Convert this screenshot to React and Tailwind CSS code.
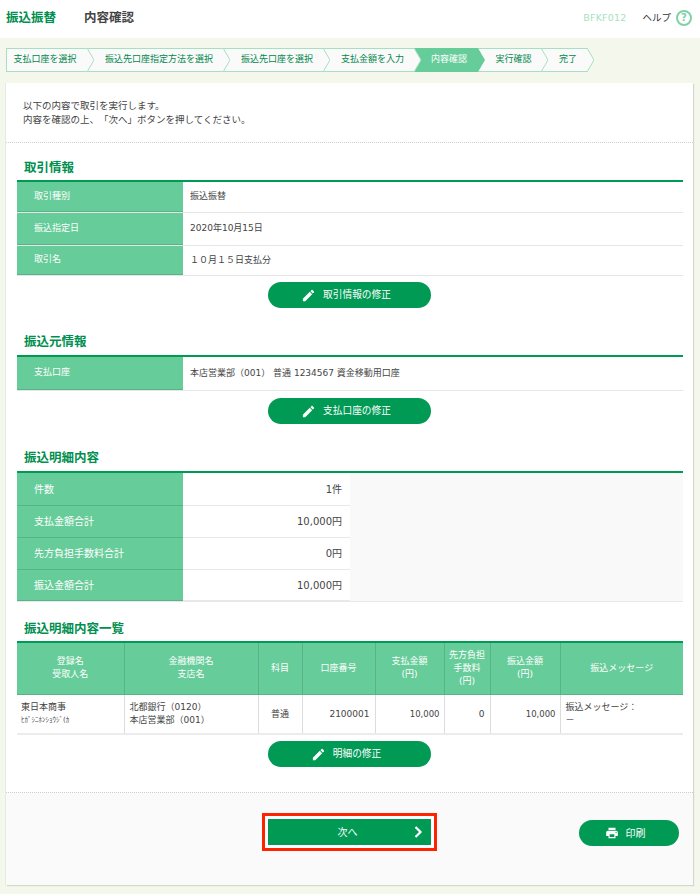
const FONT = '"DejaVu Sans","Noto Sans CJK JP",sans-serif';

const steps = [
  ['支払口座を選択', 81, false],
  ['振込先口座指定方法を選択', 136, false],
  ['振込先口座を選択', 100, false],
  ['支払金額を入力', 91, false],
  ['内容確認', 64, true],
  ['実行確認', 63, false],
  ['完了', 46, false],
];

function Step({ label, width, active, first }) {
  return (
    <div
      className={`relative flex h-6 items-center justify-center text-[9px] ${active ? 'bg-[#66cc99] text-white' : 'border-y border-[#a8dfc2] bg-[#fafafa] text-[#00884d]'} ${first ? 'border-l' : ''}`}
      style={{ width }}
    >
      <span className={`relative z-10 ${first ? 'pr-1' : active ? 'pl-[6px]' : 'pl-2'}`}>{label}</span>
      <svg className={`absolute left-full z-[5] ${active ? 'top-0' : 'top-[-1px]'}`} width="7" height="24" viewBox="0 0 7 24">
        {active ? (
          <polygon points="0,0 7,12 0,24" fill="#66cc99" />
        ) : (
          <>
            <polygon points="0,0 7,12 0,24" fill="#fafafa" />
            <polyline points="0,0 7,12 0,24" fill="none" stroke="#a8dfc2" strokeWidth="1" />
          </>
        )}
      </svg>
    </div>
  );
}

function SectionTitle({ children, className = '' }) {
  return (
    <h2 className={`pl-[7px] text-[12.5px] leading-[14px] font-bold text-[#008f4f] ${className}`}>{children}</h2>
  );
}

function InfoRow({ label, value, h }) {
  return (
    <div className="flex border-b border-[#e6e6e6]" style={{ height: h }}>
      <div className="flex w-[166px] shrink-0 items-center border-b border-[#58b488] bg-[#66cc99] pl-[17px] text-[9px] text-white">
        {label}
      </div>
      <div className="flex flex-1 items-center pl-[7px] text-[9px] text-[#444]">{value}</div>
    </div>
  );
}

function Pencil() {
  return (
    <svg width="15" height="15" viewBox="0 0 24 24" fill="#fff">
      <path d="M3 17.25V21h3.75L17.81 9.94l-3.75-3.75L3 17.25zM20.71 7.04c.39-.39.39-1.02 0-1.41l-2.34-2.34c-.39-.39-1.02-.39-1.41 0l-1.83 1.83 3.75 3.75 1.83-1.83z" />
    </svg>
  );
}

function EditButton({ children }) {
  return (
    <div className="flex justify-center pr-[2px]">
      <div className="flex h-[26px] w-[163px] items-center justify-center gap-[7px] rounded-full bg-[#009a55] pr-[6px] text-[9.7px] text-white">
        <Pencil />
        <span>{children}</span>
      </div>
    </div>
  );
}

function SumRow({ label, value, last, h = 32 }) {
  return (
    <div className={`flex ${last ? 'border-b border-[#e8e8e8]' : ''}`} style={{ height: h }}>
      <div className="flex w-[166px] shrink-0 items-center border-b border-[#58b488] bg-[#66cc99] pl-[17px] text-[10px] text-white">
        {label}
      </div>
      <div className="flex w-[167px] items-center justify-end border-b border-[#e8e8e8] bg-white pr-[8px] text-[10px] text-[#444]">{value}</div>
    </div>
  );
}

const cols = [107, 134, 44, 73, 69, 46, 70, 123];
const heads = [
  ['登録名', '受取人名'],
  ['金融機関名', '支店名'],
  ['科目'],
  ['口座番号'],
  ['支払金額', '(円)'],
  ['先方負担', '手数料', '(円)'],
  ['振込金額', '(円)'],
  ['振込メッセージ'],
];

export default function App() {
  return (
    <div className="min-h-[894px] w-[700px] bg-[#f4f8ec]" style={{ fontFamily: FONT }}>
      <header className="flex h-[38px] items-center bg-white pb-[2px] pr-[8px] pl-[6px]">
        <div className="w-[78px] text-[12.5px] font-bold text-[#008f4f]">振込振替</div>
        <div className="text-[12.5px] font-bold text-[#444]">内容確認</div>
        <div className="ml-auto text-[9.5px] tracking-[0.2px] text-[#a9dfc0]">BFKF012</div>
        <div className="ml-[16px] text-[9.5px] text-[#333]">ヘルプ</div>
        <div className="ml-[5px] flex h-4 w-4 items-center justify-center rounded-full border-2 border-[#80d1a8] text-[10px] leading-none font-bold text-[#80d1a8]">?</div>
      </header>

      <nav className="flex pt-[10px] pl-[6px]">
        {steps.map(([l, w, a], i) => (
          <Step key={l} label={l} width={w} active={a} first={i === 0} />
        ))}
      </nav>

      <main className="mt-[11px] ml-[6px] h-[802px] w-[687px] bg-white shadow-[1px_1px_1px_#d5d5cc,-1px_0_0_#e8ebdc]">
        <div className="flex h-full flex-col">
          <div className="border-b border-dotted border-[#cfcfcf] pt-[16px] pr-[11px] pb-[15px] pl-[17px] text-[9.5px] leading-[14px] text-[#444] [text-spacing-trim:space-all]">
            <p>以下の内容で取引を実行します。</p>
            <p>内容を確認の上、「次へ」ボタンを押してください。</p>
          </div>

          <div className="flex-1 pr-[10px] pl-[11px]">
            <SectionTitle className="pt-[18px] pb-[5px]">取引情報</SectionTitle>
            <div className="border-t-2 border-[#009a55]">
              <InfoRow label="取引種別" value="振込振替" h={31} />
              <InfoRow label="振込指定日" value="2020年10月15日" h={33} />
              <InfoRow label="取引名" value="１０月１５日支払分" h={30} />
            </div>
            <div className="pt-[6px]"><EditButton>取引情報の修正</EditButton></div>

            <SectionTitle className="pt-[27px] pb-[6px]">振込元情報</SectionTitle>
            <div className="border-t-2 border-[#009a55]">
              <InfoRow label="支払口座" value="本店営業部（001） 普通 1234567 資金移動用口座" h={34} />
            </div>
            <div className="pt-[7px]"><EditButton>支払口座の修正</EditButton></div>

            <SectionTitle className="pt-[27px] pb-[6px]">振込明細内容</SectionTitle>
            <div className="border-t-2 border-[#009a55] bg-[#f9f9f9]">
              <SumRow label="件数" value="1件" h={33} />
              <SumRow label="支払金額合計" value="10,000円" />
              <SumRow label="先方負担手数料合計" value="0円" />
              <SumRow label="振込金額合計" value="10,000円" last />
            </div>

            <SectionTitle className="pt-[20px] pb-[5px]">振込明細内容一覧</SectionTitle>
            <table className="w-[666px] table-fixed border-t-2 border-[#009a55] text-[9px]">
              <colgroup>
                {cols.map((c, i) => (
                  <col key={i} style={{ width: c }} />
                ))}
              </colgroup>
              <thead>
                <tr className="h-[52px] border-b border-[#58b488] bg-[#66cc99] text-white">
                  {heads.map((h, i) => (
                    <th key={i} className={`text-center leading-[13px] font-normal ${i < 7 ? 'border-r border-[#58b488]' : ''}`}>
                      {h.map((t) => (
                        <div key={t}>{t}</div>
                      ))}
                    </th>
                  ))}
                </tr>
              </thead>
              <tbody>
                <tr className="h-[40px] border-b-2 border-[#ececec] text-[#444]">
                  <td className="border-r border-[#dcdcdc] pt-px pl-[4px] leading-[13px]">
                    <div>東日本商事</div>
                    <div className="text-[7px]">ﾋｶﾞｼﾆﾎﾝｼｮｳｼﾞ(ｶ</div>
                  </td>
                  <td className="border-r border-[#dcdcdc] pt-px pl-[5px] leading-[13px]">
                    <div>北都銀行（0120）</div>
                    <div>本店営業部（001）</div>
                  </td>
                  <td className="border-r border-[#dcdcdc] pt-px text-center">普通</td>
                  <td className="border-r border-[#dcdcdc] pt-px pr-[5px] text-right">2100001</td>
                  <td className="border-r border-[#dcdcdc] pt-px pr-[4px] text-right text-[8.5px]">10,000</td>
                  <td className="border-r border-[#dcdcdc] pt-px pr-[5px] text-right">0</td>
                  <td className="border-r border-[#dcdcdc] pt-px pr-[4px] text-right text-[8.5px]">10,000</td>
                  <td className="pt-px pl-[5px] leading-[13px]">
                    <div>振込メッセージ：</div>
                    <div>－</div>
                  </td>
                </tr>
              </tbody>
            </table>
            <div className="pt-[6px]"><EditButton>明細の修正</EditButton></div>
          </div>

          <footer className="flex h-[93px] items-start border-t border-dotted border-[#cfcfcf] bg-[#fafafa]">
            <div className="mt-[20px] ml-[256px] border-[3px] border-[#ff2200] bg-white p-[3px]">
              <div className="relative flex h-[26px] w-[163px] items-center justify-center bg-[#009a55] text-[10px] text-white">
                <span className="pr-[4px]">次へ</span>
                <svg className="absolute right-[8px] top-[7px]" width="10" height="12" viewBox="0 0 10 12" fill="none" stroke="#fff" strokeWidth="2.2">
                  <polyline points="2.5,1 7.5,6 2.5,11" />
                </svg>
              </div>
            </div>
            <div className="mt-[27px] ml-[142px] flex h-[26px] w-[100px] items-center justify-center gap-[7px] rounded-full bg-[#009a55] pr-[8px] text-[10px] text-white">
              <svg width="14" height="14" viewBox="0 0 24 24" fill="#fff">
                <path d="M19 8H5c-1.66 0-3 1.34-3 3v6h4v4h12v-4h4v-6c0-1.66-1.34-3-3-3zm-3 11H8v-5h8v5zm3-7c-.55 0-1-.45-1-1s.45-1 1-1 1 .45 1 1-.45 1-1 1zm-1-9H6v4h12V3z" />
              </svg>
              <span>印刷</span>
            </div>
          </footer>
        </div>
      </main>
    </div>
  );
}
